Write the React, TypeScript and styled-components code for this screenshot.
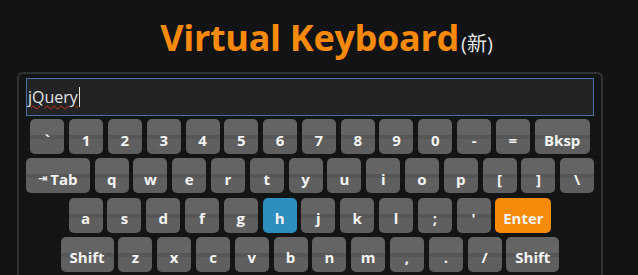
import styled, { createGlobalStyle } from "styled-components";

const GlobalStyle = createGlobalStyle`
  html, body {
    margin: 0;
    padding: 0;
    background: #111315;
    overflow: hidden;
  }
`;

const Page = styled.div`
  width: 638px;
  height: 275px;
  font-family: "Open Sans", "Noto Sans", sans-serif;
`;

const Title = styled.h1`
  margin: 0;
  padding: 18px 0 0 15px;
  height: 58px;
  box-sizing: border-box;
  text-align: center;
  font-size: 36px;
  font-weight: 700;
  line-height: 40px;
  color: #f7890b;
  letter-spacing: -0.3px;
`;

const Badge = styled.span`
  font-size: 20px;
  font-weight: 400;
  color: #e2e2e2;
  letter-spacing: 0;
  margin-left: 2px;
  font-family: "Open Sans", "Noto Sans CJK SC", sans-serif;
`;

const Panel = styled.div`
  margin: 14px 0 0 17px;
  width: 586px;
  height: 240px;
  box-sizing: border-box;
  border: 2px solid #2f3132;
  border-radius: 6px;
  background: #131414;
  padding: 4px 7px 0 7px;
`;

const Field = styled.div`
  height: 38px;
  box-sizing: border-box;
  border: 1px solid #4a6da3;
  background: #222324;
  display: flex;
  align-items: center;
  padding-left: 1px;
  font-size: 16px;
  color: #e4e4e4;
  margin-bottom: 3px;
`;

const Word = styled.span`
  text-decoration: underline wavy #d0391a;
  text-decoration-thickness: 1px;
  text-underline-offset: 2px;
`;

const Caret = styled.span`
  display: inline-block;
  width: 1px;
  height: 20px;
  background: #e4e4e4;
  margin-left: 1px;
`;

const Rows = styled.div`
  display: flex;
  flex-direction: column;
  gap: 4.3px;
`;

const Row = styled.div`
  display: flex;
  justify-content: center;
  gap: 4.8px;
`;

const tones = {
  normal: { top: "#646464", band: "#565656", bottom: "#5f5f5f" },
  blue: { top: "#2c8fbd", band: "#2c8fbd", bottom: "#2c8fbd" },
  orange: { top: "#f68a0a", band: "#f68a0a", bottom: "#f68a0a" },
};

type Tone = keyof typeof tones;

const Key = styled.div<{ $w: number; $tone: Tone }>`
  width: ${({ $w }) => $w}px;
  height: 35px;
  flex: none;
  box-sizing: border-box;
  border-radius: 5px;
  background: ${({ $tone }) => {
    const t = tones[$tone];
    return `linear-gradient(to bottom, ${t.top} 0%, ${t.top} 46%, ${t.band} 46%, ${t.band} 58%, ${t.bottom} 58%, ${t.bottom} 100%)`;
  }};
  color: #f4f4f4;
  font-size: 15px;
  font-weight: 700;
  display: flex;
  align-items: center;
  justify-content: center;
  padding-top: 6px;
  white-space: nowrap;
`;

const TabArrow = styled.span`
  font-size: 11px;
  margin-right: 3px;
  font-family: "DejaVu Sans", sans-serif;
`;

type K = { label: React.ReactNode; w?: number; tone?: Tone };

const k = (label: React.ReactNode, w = 34, tone: Tone = "normal"): K => ({ label, w, tone });

// last row sits mostly below the frame: accept / space / cancel
const layout: K[][] = [
  [..."`1234567890-=".split("").map((c) => k(c)), k("Bksp", 55)],
  [
    k(<><TabArrow>⇥</TabArrow>Tab</>, 64),
    ..."qwertyuiop[]\\".split("").map((c) => k(c)),
  ],
  [..."asdfghjkl;'".split("").map((c) => k(c, 34, c === "h" ? "blue" : "normal")), k("Enter", 56, "orange")],
  [k("Shift", 53), ..."zxcvbnm,./".split("").map((c) => k(c)), k("Shift", 53)],
  [k("", 65, "orange"), k("", 272), k("", 60, "orange")],
];

export default function App() {
  return (
    <Page>
      <GlobalStyle />
      <Title>
        Virtual Keyboard<Badge>(新)</Badge>
      </Title>
      <Panel>
        <Field>
          <Word>jQuery</Word>
          <Caret />
        </Field>
        <Rows>
          {layout.map((row, i) => (
            <Row key={i}>
              {row.map((key, j) => (
                <Key key={j} $w={key.w ?? 34} $tone={key.tone ?? "normal"}>
                  {key.label}
                </Key>
              ))}
            </Row>
          ))}
        </Rows>
      </Panel>
    </Page>
  );
}
